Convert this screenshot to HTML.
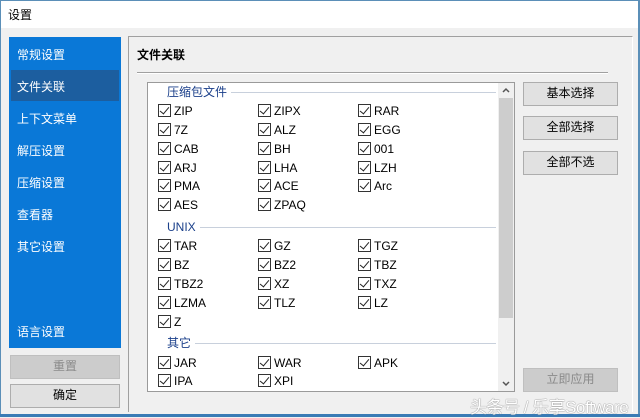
<!DOCTYPE html>
<html><head><meta charset="utf-8"><style>
*{margin:0;padding:0;box-sizing:border-box}
body{width:640px;height:417px;overflow:hidden;background:#f0f0f0;position:relative;font-family:"Liberation Sans","Noto Sans CJK SC",sans-serif;font-size:12px;color:#000}
.a{position:absolute;white-space:nowrap}
.nav{color:#fff;font-size:12px;left:17px}
.cb{position:absolute;width:13px;height:13px;border:1px solid #333;background:#fff}
.cb:after{content:"";position:absolute;left:3px;top:0px;width:4px;height:8px;border-right:1.3px solid #222;border-bottom:1.3px solid #222;transform:rotate(40deg)}
.lbl{position:absolute;font-size:12px;line-height:14px}
.btn{position:absolute;background:#e1e1e1;border:1px solid #adadad;text-align:center;font-size:12px;line-height:21px}
.grp{position:absolute;color:#1a3f8a;font-size:12px;line-height:14px;background:#fff;padding:0 4px}
.gl{position:absolute;height:1px;background:#c8d0dc}
</style></head><body>
<div class="a" style="left:0;top:0;width:640px;height:28px;background:#fff"></div>
<div class="a" style="left:0;top:0;width:640px;height:1px;background:#5b8fb8"></div>
<div class="a" style="left:0;top:0;width:1px;height:417px;background:#5b8fb8"></div>
<div class="a" style="left:638px;top:0;width:2px;height:417px;background:#5b8fb8"></div>
<div class="a" style="left:0;top:414px;width:640px;height:3px;background:#3a7bb5"></div>
<div class="a" style="left:8px;top:6px;font-size:12px">设置</div>

<div class="a" style="left:9px;top:37px;width:112px;height:311px;background:#0a78d7"></div>
<div class="a" style="left:11px;top:70px;width:108px;height:31px;background:#1c5e9f"></div>
<div class="a nav" style="top:46px">常规设置</div>
<div class="a nav" style="top:78px">文件关联</div>
<div class="a nav" style="top:110px">上下文菜单</div>
<div class="a nav" style="top:142px">解压设置</div>
<div class="a nav" style="top:174px">压缩设置</div>
<div class="a nav" style="top:206px">查看器</div>
<div class="a nav" style="top:238px">其它设置</div>
<div class="a nav" style="top:323px">语言设置</div>
<div class="btn" style="left:10px;top:355px;width:110px;height:24px;background:#cccccc;border-color:#bfbfbf;color:#8a8a8a">重置</div>
<div class="btn" style="left:10px;top:384px;width:110px;height:24px">确定</div>

<div class="a" style="left:128px;top:36px;width:505px;height:376px;border-left:1px solid #a0a0a0;border-top:1px solid #a0a0a0;border-right:1px solid #fff"></div>
<div class="a" style="left:137px;top:46px;font-weight:bold;font-size:12px">文件关联</div>
<div class="a" style="left:137px;top:72px;width:471px;height:1px;background:#a0a0a0"></div>
<div class="a" style="left:137px;top:73px;width:471px;height:1px;background:#fff"></div>

<div class="a" style="left:147px;top:82px;width:368px;height:310px;background:#fff;border:1px solid #9a9a9a;overflow:hidden">
 <div class="a" style="left:350px;top:0;width:16px;height:308px;background:#f0f0f0"></div>
 <div class="a" style="left:351px;top:15px;width:14px;height:220px;background:#cdcdcd"></div>
 <svg class="a" style="left:353px;top:3px" width="10" height="8"><path d="M2 6 L5 3 L8 6" fill="none" stroke="#555" stroke-width="1.5"/></svg>
 <svg class="a" style="left:353px;top:297px" width="10" height="8"><path d="M2 2 L5 5 L8 2" fill="none" stroke="#555" stroke-width="1.5"/></svg>
 <div class="gl" style="left:15px;top:9px;width:333px"></div><div class="grp" style="left:15px;top:2px">压缩包文件</div>
 <div class="gl" style="left:15px;top:144px;width:333px"></div><div class="grp" style="left:15px;top:137px">UNIX</div>
 <div class="gl" style="left:15px;top:260px;width:333px"></div><div class="grp" style="left:15px;top:253px">其它</div>
</div>

<div style="position:absolute;left:0;top:0">
<div class="cb" style="left:158px;top:104px"></div><div class="lbl" style="left:174px;top:104px">ZIP</div>
<div class="cb" style="left:258px;top:104px"></div><div class="lbl" style="left:274px;top:104px">ZIPX</div>
<div class="cb" style="left:358px;top:104px"></div><div class="lbl" style="left:374px;top:104px">RAR</div>
<div class="cb" style="left:158px;top:123px"></div><div class="lbl" style="left:174px;top:123px">7Z</div>
<div class="cb" style="left:258px;top:123px"></div><div class="lbl" style="left:274px;top:123px">ALZ</div>
<div class="cb" style="left:358px;top:123px"></div><div class="lbl" style="left:374px;top:123px">EGG</div>
<div class="cb" style="left:158px;top:142px"></div><div class="lbl" style="left:174px;top:142px">CAB</div>
<div class="cb" style="left:258px;top:142px"></div><div class="lbl" style="left:274px;top:142px">BH</div>
<div class="cb" style="left:358px;top:142px"></div><div class="lbl" style="left:374px;top:142px">001</div>
<div class="cb" style="left:158px;top:161px"></div><div class="lbl" style="left:174px;top:161px">ARJ</div>
<div class="cb" style="left:258px;top:161px"></div><div class="lbl" style="left:274px;top:161px">LHA</div>
<div class="cb" style="left:358px;top:161px"></div><div class="lbl" style="left:374px;top:161px">LZH</div>
<div class="cb" style="left:158px;top:179px"></div><div class="lbl" style="left:174px;top:179px">PMA</div>
<div class="cb" style="left:258px;top:179px"></div><div class="lbl" style="left:274px;top:179px">ACE</div>
<div class="cb" style="left:358px;top:179px"></div><div class="lbl" style="left:374px;top:179px">Arc</div>
<div class="cb" style="left:158px;top:198px"></div><div class="lbl" style="left:174px;top:198px">AES</div>
<div class="cb" style="left:258px;top:198px"></div><div class="lbl" style="left:274px;top:198px">ZPAQ</div>

<div class="cb" style="left:158px;top:239px"></div><div class="lbl" style="left:174px;top:239px">TAR</div>
<div class="cb" style="left:258px;top:239px"></div><div class="lbl" style="left:274px;top:239px">GZ</div>
<div class="cb" style="left:358px;top:239px"></div><div class="lbl" style="left:374px;top:239px">TGZ</div>
<div class="cb" style="left:158px;top:258px"></div><div class="lbl" style="left:174px;top:258px">BZ</div>
<div class="cb" style="left:258px;top:258px"></div><div class="lbl" style="left:274px;top:258px">BZ2</div>
<div class="cb" style="left:358px;top:258px"></div><div class="lbl" style="left:374px;top:258px">TBZ</div>
<div class="cb" style="left:158px;top:277px"></div><div class="lbl" style="left:174px;top:277px">TBZ2</div>
<div class="cb" style="left:258px;top:277px"></div><div class="lbl" style="left:274px;top:277px">XZ</div>
<div class="cb" style="left:358px;top:277px"></div><div class="lbl" style="left:374px;top:277px">TXZ</div>
<div class="cb" style="left:158px;top:296px"></div><div class="lbl" style="left:174px;top:296px">LZMA</div>
<div class="cb" style="left:258px;top:296px"></div><div class="lbl" style="left:274px;top:296px">TLZ</div>
<div class="cb" style="left:358px;top:296px"></div><div class="lbl" style="left:374px;top:296px">LZ</div>
<div class="cb" style="left:158px;top:315px"></div><div class="lbl" style="left:174px;top:315px">Z</div>

<div class="cb" style="left:158px;top:356px"></div><div class="lbl" style="left:174px;top:356px">JAR</div>
<div class="cb" style="left:258px;top:356px"></div><div class="lbl" style="left:274px;top:356px">WAR</div>
<div class="cb" style="left:358px;top:356px"></div><div class="lbl" style="left:374px;top:356px">APK</div>
<div class="cb" style="left:158px;top:374px"></div><div class="lbl" style="left:174px;top:374px">IPA</div>
<div class="cb" style="left:258px;top:374px"></div><div class="lbl" style="left:274px;top:374px">XPI</div>
</div>

<div class="btn" style="left:523px;top:82px;width:95px;height:24px">基本选择</div>
<div class="btn" style="left:523px;top:116px;width:95px;height:24px">全部选择</div>
<div class="btn" style="left:523px;top:151px;width:95px;height:24px">全部不选</div>
<div class="btn" style="left:523px;top:368px;width:95px;height:24px;background:#cccccc;border-color:#bfbfbf;color:#8a8a8a">立即应用</div>
<div class="a" style="left:470px;top:393px;font-size:17px;color:#fff;text-shadow:0 0 1px #888,0 0 1px #888;letter-spacing:-0.5px">头条号 / 乐享Software</div>
</body></html>
